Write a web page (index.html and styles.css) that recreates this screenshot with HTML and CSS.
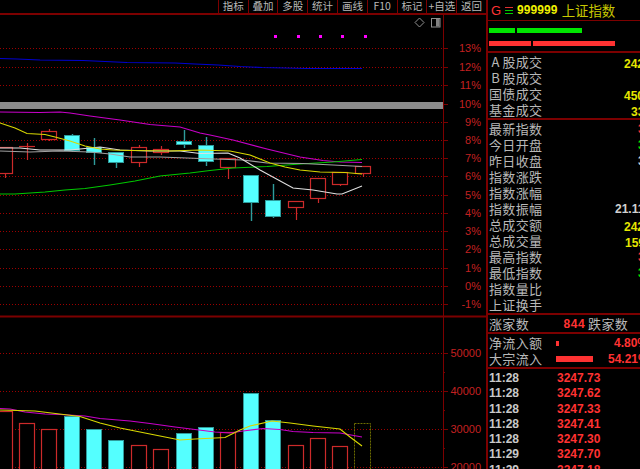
FILE: index.html
```html
<!DOCTYPE html>
<html lang="zh-CN">
<head>
    <meta charset="UTF-8">
    <meta name="viewport" content="width=device-width, initial-scale=1.0">
    <title>上证指数</title>
    <link rel="stylesheet" href="styles.css">
</head>
<body>
    <div class="terminal">
        <div class="chart-area">
            <div class="toolbar">
                <span class="tool">指标</span>
                <span class="tool">叠加</span>
                <span class="tool">多股</span>
                <span class="tool">统计</span>
                <span class="tool">画线</span>
                <span class="tool">F10</span>
                <span class="tool">标记</span>
                <span class="tool">+自选</span>
                <span class="tool">返回</span>
            </div>
            <svg class="chart" viewBox="0 15 486 454" width="486" height="454">
                <!-- price grid -->
                <path class="grid" d="M0 48.5H443M0 67.5H443M0 85.5H443M0 122.5H443M0 140.5H443M0 158.5H443M0 176.5H443M0 195.5H443M0 213.5H443M0 231.5H443M0 249.5H443M0 268.5H443M0 286.5H443M0 304.5H443"/>
                <path class="grid" d="M0 353.5H443M0 391.5H443M0 429.5H443M0 467.5H443"/>
                <rect class="band" x="0" y="102" width="443" height="7"/>

                <!-- axis -->
                <path class="axis" d="M443.5 15V469"/>
                <path class="axis-wide" d="M0 316.5H486"/>
                <path class="axis" d="M443 48.5h5M443 67.5h5M443 85.5h5M443 104.5h5M443 122.5h5M443 140.5h5M443 158.5h5M443 176.5h5M443 195.5h5M443 213.5h5M443 231.5h5M443 249.5h5M443 268.5h5M443 286.5h5M443 304.5h5M443 353.5h5M443 391.5h5M443 429.5h5M443 467.5h5M443 372.5h2M443 410.5h2M443 448.5h2"/>
                <g class="axis-text">
                    <text x="481" y="52">13%</text>
                    <text x="481" y="71">12%</text>
                    <text x="481" y="89">11%</text>
                    <text x="481" y="108">10%</text>
                    <text x="481" y="126">9%</text>
                    <text x="481" y="144">8%</text>
                    <text x="481" y="162">7%</text>
                    <text x="481" y="180">6%</text>
                    <text x="481" y="199">5%</text>
                    <text x="481" y="217">4%</text>
                    <text x="481" y="235">3%</text>
                    <text x="481" y="253">2%</text>
                    <text x="481" y="272">1%</text>
                    <text x="481" y="290">0%</text>
                    <text x="481" y="308">-1%</text>
                    <text x="481" y="357">50000</text>
                    <text x="481" y="395">40000</text>
                    <text x="481" y="433">30000</text>
                    <text x="481" y="471">20000</text>
                </g>

                <!-- corner icons -->
                <path class="icon" d="M419.5 18l4.500 4.500-4.500 4.500-4.500-4.500z"/>
                <rect class="icon" x="431.500" y="18.500" width="8.500" height="8.500"/>
                <rect class="icon-fill" x="436" y="19" width="3.500" height="7.500"/>

                <!-- signal dots -->
                <path class="dots" d="M274 35h3v3h-3zM297 35h3v3h-3zM319 35h3v3h-3zM341 35h3v3h-3zM364 35h3v3h-3z"/>

                <!-- candles -->
                <g class="down">
                    <path d="M72.500 134V152M94.500 138V165M116.500 152V168M184.500 130V148M206.500 137V166M251.500 202V221M273.500 184V218"/>
                    <rect x="64.500" y="135.500" width="15" height="15"/>
                    <rect x="86.500" y="147.500" width="15" height="5"/>
                    <rect x="108.500" y="152.500" width="15" height="10"/>
                    <rect x="176.500" y="141.500" width="15" height="3"/>
                    <rect x="198.500" y="145.500" width="15" height="16"/>
                    <rect x="243.500" y="175.500" width="15" height="27"/>
                    <rect x="265.500" y="200.500" width="15" height="16"/>
                </g>
                <g class="up">
                    <path d="M5.500 173V178M27.500 143V160M49.500 129V131M49.500 139V141M139.500 145V147M139.500 162V167M161.500 146V149M161.500 152V155M228.500 167V179M296.500 207V220M318.500 198V203M340.500 184V186M363.500 173V177"/>
                    <rect x="-5.500" y="147.500" width="18" height="26"/>
                    <path d="M19 146.500H35"/>
                    <rect x="41.500" y="131.500" width="15" height="8"/>
                    <rect x="131.500" y="147.500" width="15" height="15"/>
                    <rect x="153.500" y="149.500" width="15" height="3"/>
                    <rect x="220.500" y="158.500" width="15" height="9"/>
                    <rect x="288.500" y="201.500" width="15" height="6"/>
                    <rect x="310.500" y="178.500" width="15" height="20"/>
                    <rect x="332.500" y="172.500" width="15" height="12"/>
                    <rect x="355.500" y="166.500" width="15" height="7"/>
                </g>

                <!-- moving averages -->
                <polyline class="line blue" points="0,58.500 17,59 40,60 83,60.500 105,61.500 127,62.500 175,63 195,64 218,65 240,66.500 262,67.500 285,68 307,68.500 362,68.500"/>
                <polyline class="line magenta" points="0,112 40,112.500 60,112 70,113 90,116 120,120 150,124.500 180,127 200,133 210,135 233,140 267,149 300,157 323,160.500 340,162 362,162.500"/>
                <polyline class="line green" points="0,194 15,194 30,193 45,192 65,190 85,188.500 110,185 135,181 160,176 190,173 210,170.500 233,168 267,166.500 300,164 333,162 362,159.500"/>
                <polyline class="line gray" points="0,151 30,152 60,151 90,152 110,154 130,157 160,157 200,158.500 243,160 267,163 303,163.500 333,165 362,166.500"/>
                <polyline class="line white" points="0,148 20,148 40,150 70,150 100,147 120,150 150,151 180,151 200,153.500 228,153 240,158 260,170 293,188 313,190 337,194 342,194 362,186"/>
                <polyline class="line yellow" points="0,123 15,128 27,133.500 45,134.500 55,137 70,141 85,146 100,149 113,150 130,150.500 170,151 200,150 230,151 250,155 260,159 270,163 285,167 300,170 320,172 345,172.500 362,174"/>

                <!-- volume -->
                <g class="down">
                    <rect x="64.500" y="416.500" width="15" height="60"/>
                    <rect x="86.500" y="429.500" width="15" height="60"/>
                    <rect x="108.500" y="440.500" width="15" height="60"/>
                    <rect x="176.500" y="433.500" width="15" height="60"/>
                    <rect x="198.500" y="427.500" width="15" height="60"/>
                    <rect x="243.500" y="393.500" width="15" height="90"/>
                    <rect x="265.500" y="420.500" width="15" height="60"/>
                </g>
                <g class="up">
                    <rect x="-5.500" y="411.500" width="18" height="70"/>
                    <rect x="19.500" y="423.500" width="15" height="60"/>
                    <rect x="41.500" y="429.500" width="15" height="60"/>
                    <rect x="131.500" y="445.500" width="15" height="60"/>
                    <rect x="153.500" y="449.500" width="15" height="60"/>
                    <rect x="220.500" y="432.500" width="15" height="60"/>
                    <rect x="288.500" y="445.500" width="15" height="60"/>
                    <rect x="310.500" y="438.500" width="15" height="60"/>
                    <rect x="332.500" y="446.500" width="15" height="60"/>
                </g>
                <rect class="pending" x="354.500" y="423.500" width="16" height="60"/>
                <polyline class="line magenta" points="0,408.500 10,409 25,412 45,414 60,414.500 85,416 100,418.500 130,421 150,423.500 175,427 195,429.500 215,432 230,433 243,431 263,428.500 280,429.500 293,431.500 313,432.500 340,433 362,437"/>
                <polyline class="line yellow" points="0,410 35,411 80,416.500 100,423 120,428 150,434 180,440 195,439 225,437.500 240,430 250,426 272,421 290,423 313,426 340,429 350,437 362,446"/>
            </svg>
        </div>

        <div class="panel">
            <div class="title-row">
                <span class="market">G</span>
                <span class="menu-mark"><i></i><i></i><i></i></span>
                <span class="code">999999</span>
                <span class="name">上证指数</span>
            </div>
            <div class="ratio-bars">
                <div class="ratio">
                    <span class="bar green-bar w26"></span>
                    <span class="bar green-bar w65"></span>
                </div>
                <div class="ratio">
                    <span class="bar red-bar w42"></span>
                    <span class="bar red-bar w82"></span>
                </div>
            </div>

            <div class="section">
                <div class="row"><span class="label"><b class="head">A</b>股成交</span><span class="val yellow-text at-624">2423亿</span></div>
                <div class="row"><span class="label"><b class="head">B</b>股成交</span></div>
                <div class="row"><span class="label">国债成交</span><span class="val yellow-text at-624">4501亿</span></div>
                <div class="row"><span class="label">基金成交</span><span class="val yellow-text at-631">33亿</span></div>
            </div>

            <div class="section">
                <div class="row"><span class="label">最新指数</span><span class="val red-text at-638">3247.18</span></div>
                <div class="row"><span class="label">今日开盘</span><span class="val green-text at-638">3204.20</span></div>
                <div class="row"><span class="label">昨日收盘</span><span class="val white-text at-638">3214.24</span></div>
                <div class="row"><span class="label">指数涨跌</span></div>
                <div class="row"><span class="label">指数涨幅</span></div>
                <div class="row"><span class="label">指数振幅</span><span class="val white-text at-615">21.11</span></div>
                <div class="row"><span class="label">总成交额</span><span class="val yellow-text at-624">2423亿</span></div>
                <div class="row"><span class="label">总成交量</span><span class="val yellow-text at-625">159万</span></div>
                <div class="row"><span class="label">最高指数</span><span class="val red-text at-638">3251.10</span></div>
                <div class="row"><span class="label">最低指数</span><span class="val green-text at-638">3204.20</span></div>
                <div class="row"><span class="label">指数量比</span></div>
                <div class="row"><span class="label">上证换手</span></div>
            </div>

            <div class="section breadth">
                <span class="label">涨家数</span>
                <span class="count">844</span>
                <span class="label">跌家数</span>
            </div>

            <div class="section flows">
                <div class="row"><span class="label">净流入额</span><span class="flow-bar small"></span><span class="val red-text at-614">4.80%</span></div>
                <div class="row"><span class="label">大宗流入</span><span class="flow-bar big"></span><span class="val red-text at-608">54.21%</span></div>
            </div>

            <div class="ticks">
                <div class="tick"><span class="time">11:28</span><span class="price">3247.73</span></div>
                <div class="tick"><span class="time">11:28</span><span class="price">3247.62</span></div>
                <div class="tick"><span class="time">11:28</span><span class="price">3247.33</span></div>
                <div class="tick"><span class="time">11:28</span><span class="price">3247.41</span></div>
                <div class="tick"><span class="time">11:28</span><span class="price">3247.30</span></div>
                <div class="tick"><span class="time">11:29</span><span class="price">3247.70</span></div>
                <div class="tick"><span class="time">11:29</span><span class="price">3247.18</span></div>
            </div>
        </div>
    </div>
</body>
</html>
```

FILE: styles.css
```css
:root {
    --rule: #7c0000;
    --red: #ff3232;
    --axis-red: #c42020;
    --cyan: #54ffff;
    --label: #b8b8b8;
    --yellow: #e6e600;
}

html, body {
    margin: 0;
    height: 100%;
    background: #000;
    overflow: hidden;
}

body {
    font-family: "Liberation Sans", "Noto Sans CJK SC", sans-serif;
    color: var(--label);
}

.terminal {
    display: flex;
    width: 640px;
    height: 469px;
    overflow: hidden;
}

/* left: toolbar + chart */
.chart-area {
    width: 486px;
    flex: none;
}

.toolbar {
    display: flex;
    justify-content: flex-end;
    height: 13px;
    border-bottom: 2px solid var(--rule);
}

.tool {
    width: 29.800px;
    box-sizing: border-box;
    border-left: 1px solid var(--rule);
    font-family: "Noto Sans CJK SC", sans-serif;
    font-size: 10.500px;
    line-height: 11px;
    text-align: center;
    white-space: nowrap;
}

.chart {
    display: block;
}

.grid {
    fill: none;
    stroke: #9c0000;
    stroke-dasharray: 1 2;
}

.band {
    fill: #8c8c8c;
    stroke: none;
}

.axis {
    fill: none;
    stroke: var(--rule);
}

.axis-wide {
    fill: none;
    stroke: var(--rule);
    stroke-width: 2;
}

.axis-text {
    fill: var(--axis-red);
    font-family: "Liberation Sans", sans-serif;
    font-size: 11px;
    text-anchor: end;
}

.icon {
    fill: none;
    stroke: #909090;
}

.icon-fill {
    fill: #808080;
}

.dots {
    fill: #ff00ff;
}

.up rect,
.up path {
    fill: #000;
    stroke: #cc2a2a;
    stroke-width: 1.200;
}

.down rect {
    fill: var(--cyan);
    stroke: #2f9c9c;
}

.down path {
    fill: none;
    stroke: #2f9c9c;
    stroke-width: 1.400;
}

.pending {
    fill: none;
    stroke: #6e6e00;
    stroke-dasharray: 2 1;
}

.line {
    fill: none;
    stroke-width: 1.100;
}

.blue { stroke: #0000d0; }
.magenta { stroke: #c800c8; }
.green { stroke: #00c800; }
.gray { stroke: #a0a0a0; }
.white { stroke: #e0e0e0; }
.yellow { stroke: #d8d800; }

/* right: quote panel */
.panel {
    flex: 1;
    min-width: 0;
    box-sizing: border-box;
    border-left: 2px solid var(--rule);
    overflow: hidden;
}

.title-row {
    display: flex;
    align-items: center;
    height: 20px;
    border-bottom: 1px solid var(--rule);
    white-space: nowrap;
}

.market {
    margin-left: 3px;
    width: 14px;
    color: var(--red);
    font-size: 13px;
}

.menu-mark {
    display: flex;
    flex-direction: column;
    gap: 2px;
    width: 8px;
    margin-right: 4px;
}

.menu-mark i {
    display: block;
    height: 1px;
    background: #00d000;
}

.menu-mark i:first-child {
    background: #e03030;
}

.code {
    color: #f0f000;
    font-size: 12px;
    font-weight: bold;
    letter-spacing: 0.100px;
}

.name {
    margin-left: 4px;
    color: #c8c800;
    font-family: "Noto Sans CJK SC", sans-serif;
    font-size: 13.400px;
    line-height: 20px;
}

.ratio-bars {
    display: flex;
    flex-direction: column;
    gap: 8px;
    height: 23px;
    padding: 7px 0 0 1px;
    border-bottom: 2px solid var(--rule);
}

.ratio {
    display: flex;
    gap: 2px;
    height: 5px;
}

.bar { display: block; height: 100%; }
.green-bar { background: #00e600; }
.red-bar { background: var(--red); }
.w26 { width: 26px; }
.w65 { width: 65px; }
.w42 { width: 42px; }
.w82 { width: 82px; }

.section {
    border-bottom: 2px solid var(--rule);
    padding-top: 1px;
}

.row {
    display: flex;
    align-items: center;
    height: 16px;
    white-space: nowrap;
}

.label {
    flex: none;
    font-family: "Noto Sans CJK SC", sans-serif;
    font-size: 13px;
    letter-spacing: 0.350px;
    line-height: 16px;
}

.row .label {
    width: 54px;
    margin-left: 1px;
}

.head {
    display: inline-block;
    width: 13.400px;
    font-weight: normal;
    text-align: center;
}

.val {
    font-size: 12px;
    font-weight: bold;
}

.yellow-text { color: var(--yellow); }
.red-text { color: var(--red); }
.green-text { color: #00e600; }
.white-text { color: #d0d0d0; }

/* value columns, the names are the x they start at */
.at-608 { margin-left: 15px; }
.at-614 { margin-left: 55px; }
.at-615 { margin-left: 72px; }
.at-624 { margin-left: 81px; }
.at-625 { margin-left: 82px; }
.at-631 { margin-left: 88px; }
.at-638 { margin-left: 95px; }

.breadth {
    display: flex;
    align-items: center;
    height: 16px;
    padding-left: 1px;
    white-space: nowrap;
}

.count {
    width: 59px;
    padding-right: 3px;
    box-sizing: border-box;
    text-align: right;
    color: var(--red);
    font-size: 12px;
    font-weight: bold;
    letter-spacing: 0.500px;
}

.flow-bar {
    flex: none;
    display: block;
    background: var(--red);
}

.flow-bar.small {
    width: 3px;
    height: 5px;
    margin-left: 13px;
}

.flow-bar.big {
    width: 37px;
    height: 6px;
    margin-left: 13px;
}

.ticks {
    padding: 2px 0 0 1px;
}

.tick {
    display: flex;
    height: 15.300px;
    line-height: 15.300px;
    font-size: 12px;
    font-weight: bold;
    white-space: nowrap;
}

.time {
    width: 68px;
    color: #c8c8c8;
}

.price {
    color: var(--red);
}
```
